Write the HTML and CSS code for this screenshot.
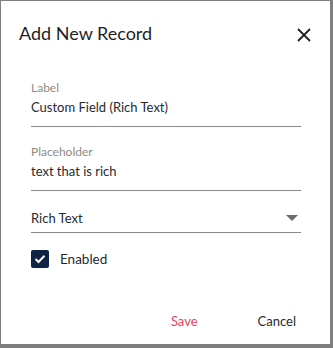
FILE: index.html
```html
<!DOCTYPE html>
<html lang="en">
<head>
    <meta charset="UTF-8">
    <title>Add New Record</title>
    <link rel="stylesheet" href="styles.css">
</head>
<body>
    <div class="dialog">
        <div class="dialog-header">
            <h2>Add New Record</h2>
            <button class="close" type="button" aria-label="Close">
                <svg width="14" height="14" viewBox="0 0 14 14">
                    <path d="M1 1 L13 13 M13 1 L1 13" stroke="#1f1f1f" stroke-width="1.8" fill="none"/>
                </svg>
            </button>
        </div>
        <div class="dialog-body">
            <div class="field">
                <label>Label</label>
                <div class="value">Custom Field (Rich Text)</div>
            </div>
            <div class="field">
                <label>Placeholder</label>
                <div class="value">text that is rich</div>
            </div>
            <div class="field select">
                <div class="value">Rich Text</div>
                <span class="caret"></span>
            </div>
            <div class="check-row">
                <span class="checkbox">
                    <svg width="12" height="10" viewBox="0 0 12 10">
                        <path d="M1.5 5 L4.5 8 L10.5 1.8" stroke="#fff" stroke-width="2" fill="none"/>
                    </svg>
                </span>
                <span>Enabled</span>
            </div>
        </div>
        <div class="dialog-actions">
            <button type="button" class="save">Save</button>
            <button type="button" class="cancel">Cancel</button>
        </div>
    </div>
</body>
</html>
```

FILE: styles.css
```css
body {
    margin: 0;
    padding: 1px;
    background-color: #7f7f7f;
    font-family: Lato, "Open Sans", sans-serif;
}
.dialog {
    width: 329px;
    height: 343px;
    background-color: #fff;
    display: flex;
    flex-direction: column;
}
.dialog-header {
    display: flex;
    align-items: flex-start;
    justify-content: space-between;
    padding: 20px 19px 0 18px;
}
.dialog-header h2 {
    margin: 0;
    font-size: 18px;
    font-weight: normal;
    line-height: 24px;
    color: #1f1f1f;
}
.close {
    border: none;
    background: none;
    padding: 0;
    margin-top: 7px;
    width: 14px;
    height: 14px;
    display: flex;
}
.dialog-body {
    padding: 35px 29px 0 30px;
}
.field {
    border-bottom: 1px solid #8a8a8a;
    padding-bottom: 10px;
    margin-bottom: 17px;
}
.field label {
    display: block;
    font-size: 12px;
    line-height: 16px;
    color: #918a84;
    margin-bottom: 2px;
}
.field .value {
    font-size: 13px;
    line-height: 18px;
    color: #262a33;
}
.field.select {
    display: flex;
    justify-content: space-between;
    align-items: center;
    padding-top: 1px;
    padding-bottom: 5px;
}
.caret {
    width: 0;
    height: 0;
    border-left: 6px solid transparent;
    border-right: 6px solid transparent;
    border-top: 6px solid #6b6b6b;
    margin-right: 3px;
}
.check-row {
    display: flex;
    align-items: center;
    gap: 11px;
    font-size: 13.5px;
    color: #262a33;
}
.checkbox {
    width: 18px;
    height: 18px;
    border-radius: 2px;
    background-color: #0e2444;
    display: flex;
    align-items: center;
    justify-content: center;
}
.dialog-actions {
    margin-top: auto;
    display: flex;
    justify-content: flex-end;
    gap: 60px;
    padding: 0 34px 15px 0;
}
.dialog-actions button {
    border: none;
    background: none;
    padding: 0;
    font-family: Lato, "Open Sans", sans-serif;
    font-size: 13px;
}
.save {
    color: #e8445e;
}
.cancel {
    color: #262a33;
}
```
